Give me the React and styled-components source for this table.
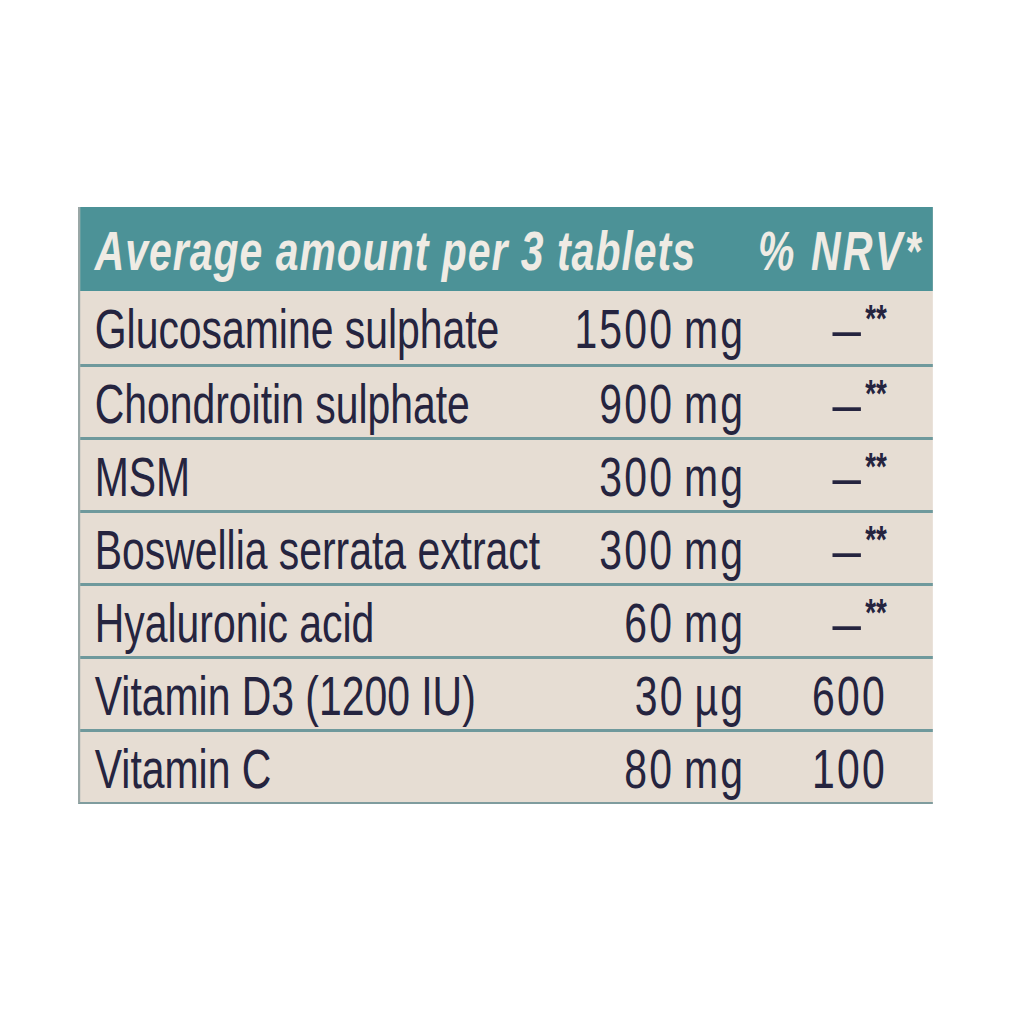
import React from 'react';
import styled, { createGlobalStyle } from 'styled-components';

const GlobalStyle = createGlobalStyle`
  html, body {
    margin: 0;
    padding: 0;
    background: #ffffff;
  }
`

// the label uses a condensed grotesk; no narrow face is installed,
// so the whole panel is squeezed horizontally by this factor
const SQUEEZE = 0.73

const Page = styled.div`
  width: 1024px;
  height: 1024px;
  box-sizing: border-box;
  padding: 207px 0 0 78px;
  overflow: hidden;
  font-family: "Liberation Sans", Arial, sans-serif;
`

const Table = styled.div`
  width: ${Math.round(855 / SQUEEZE)}px;
  background: #e6ddd3;
  border-left: 3px solid #9aa7a6;
  border-bottom: 2px solid #7f9c9e;
  box-sizing: border-box;
  transform: scaleX(${SQUEEZE});
  transform-origin: left top;
`

const Header = styled.div`
  height: 84px;
  background: #4c9297;
  display: flex;
  justify-content: space-between;
  align-items: center;
  padding: 2px 13px 0 20px;
  box-sizing: border-box;
  color: #efebe4;
  font-weight: bold;
  font-style: italic;
  font-size: 56px;
  letter-spacing: 1.4px;
  white-space: nowrap;
`

const HeadCell = styled.span`
  letter-spacing: ${p => p.$wide ? '3.5px' : 'inherit'};
`

const Row = styled.div`
  height: 73px;
  display: grid;
  grid-template-columns: 1fr auto 194px;
  align-items: center;
  border-top: ${p => (p.first ? 'none' : '3px solid #6f999c')};
  box-sizing: border-box;
  color: #25243f;
  font-size: 56px;
  padding: 2px 66px 0 20px;
`

const Name = styled.span`
  white-space: nowrap;
`

const Figure = styled.span`
  text-align: right;
  white-space: nowrap;
  letter-spacing: 3px;
  word-spacing: -5px;
  margin-right: -3px;
`

const Dash = styled.span`
  display: inline-block;
  transform: scaleX(1.25);
  transform-origin: right;
  margin-right: 2px;
`

const Stars = styled.sup`
  font-size: 38px;
  font-weight: bold;
  letter-spacing: 0;
  vertical-align: 16px;
  line-height: 0;
`

const rows = [
  { name: 'Glucosamine sulphate', amount: '1500 mg', nrv: null },
  { name: 'Chondroitin sulphate', amount: '900 mg', nrv: null },
  { name: 'MSM', amount: '300 mg', nrv: null },
  { name: 'Boswellia serrata extract', amount: '300 mg', nrv: null },
  { name: 'Hyaluronic acid', amount: '60 mg', nrv: null },
  { name: 'Vitamin D3 (1200 IU)', amount: '30 µg', nrv: '600' },
  { name: 'Vitamin C', amount: '80 mg', nrv: '100' },
]

export default function App() {
  return (
    <Page>
      <GlobalStyle />
      <Table>
        <Header>
          <HeadCell>Average amount per 3 tablets</HeadCell>
          <HeadCell $wide>% NRV*</HeadCell>
        </Header>
        {rows.map((r, i) => (
          <Row key={i} first={i === 0}>
            <Name>{r.name}</Name>
            <Figure>{r.amount}</Figure>
            <Figure>{r.nrv ? r.nrv : <><Dash>–</Dash><Stars>**</Stars></>}</Figure>
          </Row>
        ))}
      </Table>
    </Page>
  );
}
